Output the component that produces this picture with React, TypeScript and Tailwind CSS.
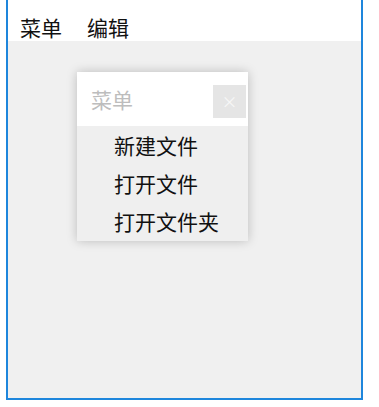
export default function App() {
  const items = ["新建文件", "打开文件", "打开文件夹"];
  return (
    <div className="w-[379px] h-[407px] bg-white relative font-['Noto_Sans_CJK_SC',sans-serif]">
      <div className="ml-[6px] w-[357px] h-[400px] border-x-2 border-b-2 border-[#1e86dc] flex flex-col">
        <div className="h-[41px] bg-white flex items-end pl-[12px] gap-[25px] text-[21px] leading-[28px] text-[#111]">
          <span>菜单</span>
          <span>编辑</span>
        </div>
        <div className="flex-1 bg-[#f0f0f0]" />
      </div>
      <div className="absolute left-[77px] top-[72px] w-[171px] h-[169px] bg-[#efefef] shadow-[0_0_10px_rgba(0,0,0,0.22)] flex flex-col">
        <div className="h-[54px] bg-white flex items-center justify-between pl-[14px] pr-[2px]">
          <span className="text-[21px] text-[#bdbdbd] leading-none">菜单</span>
          <div className="w-[33px] h-[33px] bg-[#e5e5e5] flex items-center justify-center text-[16px] text-[#f7f7f7] leading-none mt-[4px]">
            ×
          </div>
        </div>
        <div className="flex flex-col">
          {items.map((t) => (
            <div key={t} className="h-[38px] flex items-center pl-[37px] text-[21px] text-[#111] leading-none">
              {t}
            </div>
          ))}
        </div>
      </div>
    </div>
  );
}
